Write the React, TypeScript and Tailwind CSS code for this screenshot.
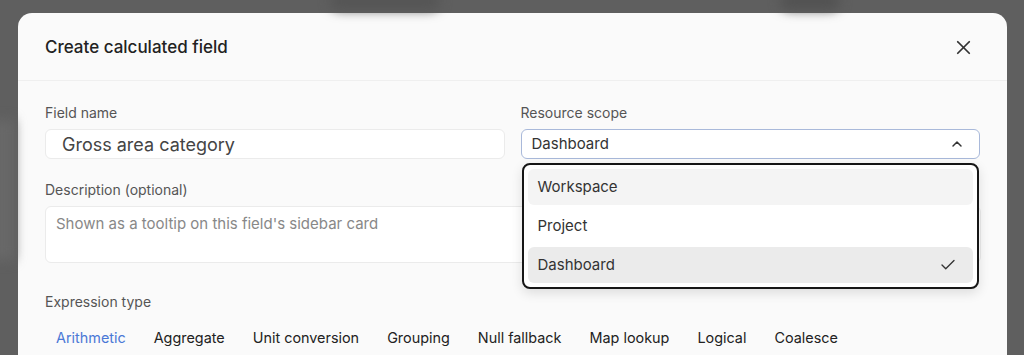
import { Check, ChevronUp, X } from "lucide-react";

const tabs = [
  "Arithmetic",
  "Aggregate",
  "Unit conversion",
  "Grouping",
  "Null fallback",
  "Map lookup",
  "Logical",
  "Coalesce",
];

const scopes = ["Workspace", "Project", "Dashboard"];

export default function App() {
  return (
    <div className="relative h-[355px] w-[1024px] overflow-hidden bg-[#5f5f5f] font-['Inter',sans-serif]">
      {/* blurred page behind the overlay */}
      <div className="pointer-events-none absolute left-[330px] top-[-8px] h-[18px] w-[110px] rounded-full bg-[#555] blur-[6px]" />
      <div className="pointer-events-none absolute left-[780px] top-[-8px] h-[18px] w-[60px] rounded-full bg-[#525252] blur-[6px]" />
      <div className="pointer-events-none absolute left-[-10px] top-[120px] h-[140px] w-[24px] bg-[#686868] blur-[6px]" />

      <div className="ml-[18px] mt-[13px] w-[989px] rounded-[14px] bg-[#fafafa]">
        <div className="flex h-[68px] items-center justify-between border-b border-[#efefef] pl-[27px] pr-[32px]">
          <h2 className="mt-[2px] text-[17px] font-medium text-[#222]">
            Create calculated field
          </h2>
          <X className="mt-[2px] h-[23px] w-[23px] text-[#333]" strokeWidth={1.8} />
        </div>

        <div className="px-[27px] pt-[22px]">
          <div className="grid grid-cols-2 gap-4">
            <div className="flex flex-col gap-[6px]">
              <label className="text-[14px] leading-5 text-[#555]">
                Field name
              </label>
              <div className="flex h-[30px] items-center rounded-md border border-[#ebebeb] bg-white px-4 text-[18px] text-[#444]">
                Gross area category
              </div>
            </div>
            <div className="relative flex flex-col gap-[6px]">
              <label className="text-[14px] leading-5 text-[#555]">
                Resource scope
              </label>
              <div className="flex h-[30px] items-center justify-between rounded-md border border-[#a9b9da] bg-white pl-[10px] pr-[14px] text-[15px] text-[#333]">
                Dashboard
                <ChevronUp className="h-4 w-4 text-[#333]" strokeWidth={2.2} />
              </div>

              <div className="absolute left-px right-px top-[60px] z-10 flex flex-col gap-[3px] rounded-lg border-2 border-[#161616] bg-white p-1 shadow-[0_4px_12px_rgba(0,0,0,0.12)]">
                {scopes.map((s) => (
                  <div
                    key={s}
                    className={
                      s === "Dashboard"
                        ? "flex h-9 items-center justify-between rounded-md bg-[#ebebeb] pl-[10px] pr-[16px] text-[15px] text-[#333]"
                        : s === "Workspace"
                          ? "flex h-9 items-center rounded-md bg-[#f4f4f4] pl-[10px] text-[15px] text-[#333]"
                          : "flex h-9 items-center rounded-md pl-[10px] text-[15px] text-[#333]"
                    }
                  >
                    {s}
                    {s === "Dashboard" && (
                      <Check className="h-[18px] w-[18px] text-[#333]" strokeWidth={1.8} />
                    )}
                  </div>
                ))}
              </div>
            </div>
          </div>

          <div className="mt-[21px] flex flex-col gap-[6px]">
            <label className="text-[14px] leading-5 text-[#555]">
              Description (optional)
            </label>
            <div className="h-[57px] w-[936px] rounded-md border border-[#ebebeb] bg-white px-[10px] pt-[6px] text-[15px] text-[#888]">
              Shown as a tooltip on this field's sidebar card
            </div>
          </div>

          <div className="mt-[29px] text-[14px] leading-5 text-[#555]">
            Expression type
          </div>
          <div className="mt-4 flex gap-7 pl-[11px]">
            {tabs.map((t) => (
              <span
                key={t}
                className={
                  t === "Arithmetic"
                    ? "text-[14.4px] leading-5 text-[#4a78d6]"
                    : "text-[14.4px] leading-5 text-[#222]"
                }
              >
                {t}
              </span>
            ))}
          </div>
          <div className="h-10" />
        </div>
      </div>
    </div>
  );
}
